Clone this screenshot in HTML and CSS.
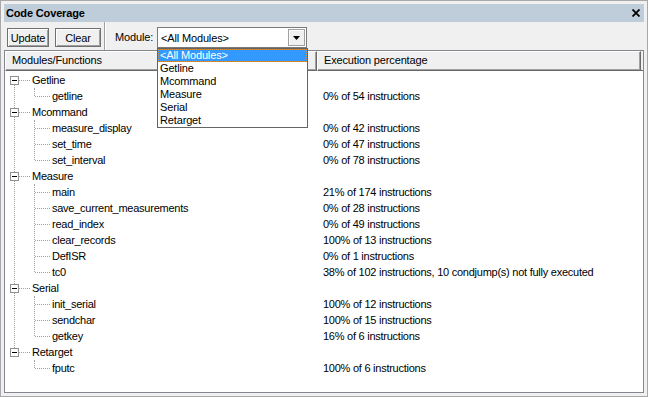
FILE: index.html
```html
<!DOCTYPE html>
<html>
<head>
<meta charset="utf-8">
<title>Code Coverage</title>
<link rel="stylesheet" href="styles.css">
</head>
<body>
<div class="window">
  <div class="titlebar">
    <span class="title">Code Coverage</span>
    <svg class="close" width="8" height="8" viewBox="0 0 8 8"><path d="M0.5 0.5 L7.5 7.5 M7.5 0.5 L0.5 7.5" stroke="#000" stroke-width="1.8" fill="none"/></svg>
  </div>
  <div class="toolbar">
    <button class="btn btn-update">Update</button>
    <button class="btn btn-clear">Clear</button>
    <div class="sep"></div>
    <span class="module-label">Module:</span>
    <div class="combo">
      <div class="combo-field">
        <span class="combo-text">&lt;All Modules&gt;</span>
        <span class="combo-btn"><svg width="7" height="4" viewBox="0 0 7 4"><path d="M0 0 H7 L3.5 4 Z" fill="#000"/></svg></span>
      </div>
      <ul class="dropdown">
        <li class="selected">&lt;All Modules&gt;</li>
        <li>Getline</li>
        <li>Mcommand</li>
        <li>Measure</li>
        <li>Serial</li>
        <li>Retarget</li>
      </ul>
    </div>
  </div>
  <div class="listview">
    <div class="header">
      <div class="hcol hcol1">Modules/Functions</div>
      <div class="hcol hcol2">Execution percentage</div>
      <div class="hfill"></div>
    </div>
    <div class="tree">
      <div class="group">
        <div class="row"><div class="c1"><span class="box"></span><span class="hline"></span><span class="name">Getline</span></div><div class="c2"></div></div>
        <div class="children">
          <div class="row"><div class="c1"><span class="hline2"></span><span class="name">getline</span></div><div class="c2">0% of 54 instructions</div></div>
        </div>
      </div>
      <div class="group">
        <div class="row"><div class="c1"><span class="box"></span><span class="hline"></span><span class="name">Mcommand</span></div><div class="c2"></div></div>
        <div class="children">
          <div class="row"><div class="c1"><span class="hline2"></span><span class="name">measure_display</span></div><div class="c2">0% of 42 instructions</div></div>
          <div class="row"><div class="c1"><span class="hline2"></span><span class="name">set_time</span></div><div class="c2">0% of 47 instructions</div></div>
          <div class="row"><div class="c1"><span class="hline2"></span><span class="name">set_interval</span></div><div class="c2">0% of 78 instructions</div></div>
        </div>
      </div>
      <div class="group">
        <div class="row"><div class="c1"><span class="box"></span><span class="hline"></span><span class="name">Measure</span></div><div class="c2"></div></div>
        <div class="children">
          <div class="row"><div class="c1"><span class="hline2"></span><span class="name">main</span></div><div class="c2">21% of 174 instructions</div></div>
          <div class="row"><div class="c1"><span class="hline2"></span><span class="name">save_current_measurements</span></div><div class="c2">0% of 28 instructions</div></div>
          <div class="row"><div class="c1"><span class="hline2"></span><span class="name">read_index</span></div><div class="c2">0% of 49 instructions</div></div>
          <div class="row"><div class="c1"><span class="hline2"></span><span class="name">clear_records</span></div><div class="c2">100% of 13 instructions</div></div>
          <div class="row"><div class="c1"><span class="hline2"></span><span class="name">DefISR</span></div><div class="c2">0% of 1 instructions</div></div>
          <div class="row"><div class="c1"><span class="hline2"></span><span class="name">tc0</span></div><div class="c2">38% of 102 instructions, 10 condjump(s) not fully executed</div></div>
        </div>
      </div>
      <div class="group">
        <div class="row"><div class="c1"><span class="box"></span><span class="hline"></span><span class="name">Serial</span></div><div class="c2"></div></div>
        <div class="children">
          <div class="row"><div class="c1"><span class="hline2"></span><span class="name">init_serial</span></div><div class="c2">100% of 12 instructions</div></div>
          <div class="row"><div class="c1"><span class="hline2"></span><span class="name">sendchar</span></div><div class="c2">100% of 15 instructions</div></div>
          <div class="row"><div class="c1"><span class="hline2"></span><span class="name">getkey</span></div><div class="c2">16% of 6 instructions</div></div>
        </div>
      </div>
      <div class="group">
        <div class="row"><div class="c1"><span class="box"></span><span class="hline"></span><span class="name">Retarget</span></div><div class="c2"></div></div>
        <div class="children">
          <div class="row"><div class="c1"><span class="hline2"></span><span class="name">fputc</span></div><div class="c2">100% of 6 instructions</div></div>
        </div>
      </div>
    </div>
  </div>
</div>
</body>
</html>
```

FILE: styles.css
```css
* { box-sizing: border-box; }
html, body {
  margin: 0;
  padding: 0;
  background: #f0f0f0;
}
body {
  font-family: "Liberation Sans", Arial, sans-serif;
  font-size: 11px;
  letter-spacing: -0.15px;
  color: #000;
}
.window {
  width: 648px;
  height: 397px;
  border: 1px solid #a8a8a8;
  padding: 3px 3px 3px 3px;
  display: flex;
  flex-direction: column;
  background: #f0f0f0;
}
.titlebar {
  height: 18px;
  flex: none;
  background: #bfcddb;
  display: flex;
  align-items: center;
  justify-content: space-between;
  padding: 0 4px 0 2px;
}
.title {
  font-weight: bold;
  font-size: 11px;
}
.close {
  display: block;
}
.toolbar {
  height: 28px;
  flex: none;
  display: flex;
  align-items: flex-start;
  padding-left: 3px;
}
.btn {
  font-family: inherit;
  font-size: 11px;
  letter-spacing: -0.15px;
  color: #000;
  height: 19px;
  margin-top: 6px;
  padding: 0;
  background: #f0f0f0;
  border: 1px solid #707070;
  border-radius: 0;
  box-shadow: inset 1px 1px #ffffff, inset -1px -1px #a0a0a0;
  line-height: 16px;
}
.btn-update { width: 42px; }
.btn-clear { width: 46px; margin-left: 6px; }
.sep {
  width: 2px;
  height: 28px;
  margin-left: 3px;
  border-left: 1px solid #a0a0a0;
  border-right: 1px solid #ffffff;
}
.module-label {
  margin-left: 9px;
  margin-top: 9px;
  line-height: 13px;
  width: 40px;
}
.combo {
  position: relative;
  margin-left: 2px;
  margin-top: 5px;
}
.combo-field {
  width: 150px;
  height: 21px;
  background: #fff;
  border: 1px solid #7a7a7a;
  display: flex;
  align-items: center;
  justify-content: space-between;
  padding: 0 1px 0 3px;
}
.combo-btn {
  width: 17px;
  height: 17px;
  background: #f0f0f0;
  border: 1px solid #a0a0a0;
  box-shadow: inset 1px 1px #ffffff;
  display: flex;
  align-items: center;
  justify-content: center;
}
.combo-btn svg { display: block; }
.dropdown {
  position: absolute;
  left: 0;
  top: 100%;
  width: 151px;
  margin: 0;
  padding: 0;
  list-style: none;
  background: #fff;
  border: 1px solid #646464;
  z-index: 5;
}
.dropdown li {
  height: 13px;
  line-height: 13px;
  padding-left: 2px;
}
.dropdown li.selected {
  background: #3399ff;
  color: #fff;
  outline: 1px dotted #e0923a;
  outline-offset: -1px;
}
.listview {
  flex: 1;
  border: 1px solid #828790;
  background: #fff;
  display: flex;
  flex-direction: column;
  min-height: 0;
}
.header {
  display: flex;
  height: 20px;
  flex: none;
  background: #f0f0f0;
}
.hcol {
  height: 20px;
  line-height: 17px;
  padding-left: 6px;
  background: #f0f0f0;
  border-top: 1px solid #ffffff;
  border-left: 1px solid #ffffff;
  border-right: 1px solid #696969;
  border-bottom: 1px solid #696969;
  box-shadow: inset -1px -1px #a0a0a0;
}
.hcol1 { width: 312px; }
.hcol2 { width: 324px; }
.hfill { flex: 1; border-bottom: 1px solid #696969; }
.tree {
  flex: 1;
  position: relative;
  background: #fff;
  padding-top: 1px;
  letter-spacing: -0.25px;
}
.group {
  position: relative;
}
.group:not(:last-child)::before {
  content: "";
  position: absolute;
  left: 9px;
  top: 8px;
  height: 100%;
  border-left: 1px dotted #a0a0a0;
}
.children {
  position: relative;
}
.children::before {
  content: "";
  position: absolute;
  left: 29px;
  top: 0;
  height: calc(100% - 8px);
  border-left: 1px dotted #a0a0a0;
}
.row {
  height: 16px;
  display: flex;
  align-items: center;
}
.c1 {
  width: 318px;
  flex: none;
  display: flex;
  align-items: center;
  height: 16px;
}
.c2 {
  flex: 1;
  line-height: 16px;
  white-space: nowrap;
}
.box {
  width: 9px;
  height: 9px;
  margin-left: 5px;
  border: 1px solid #919191;
  background: #fff;
  position: relative;
  z-index: 1;
  display: flex;
  align-items: center;
  justify-content: center;
}
.box::after {
  content: "";
  width: 5px;
  height: 1px;
  background: #000;
}
.hline {
  width: 11px;
  height: 0;
  border-top: 1px dotted #a0a0a0;
}
.hline2 {
  width: 15px;
  height: 0;
  margin-left: 30px;
  border-top: 1px dotted #a0a0a0;
}
.name {
  margin-left: 2px;
  line-height: 16px;
  white-space: nowrap;
}
```
